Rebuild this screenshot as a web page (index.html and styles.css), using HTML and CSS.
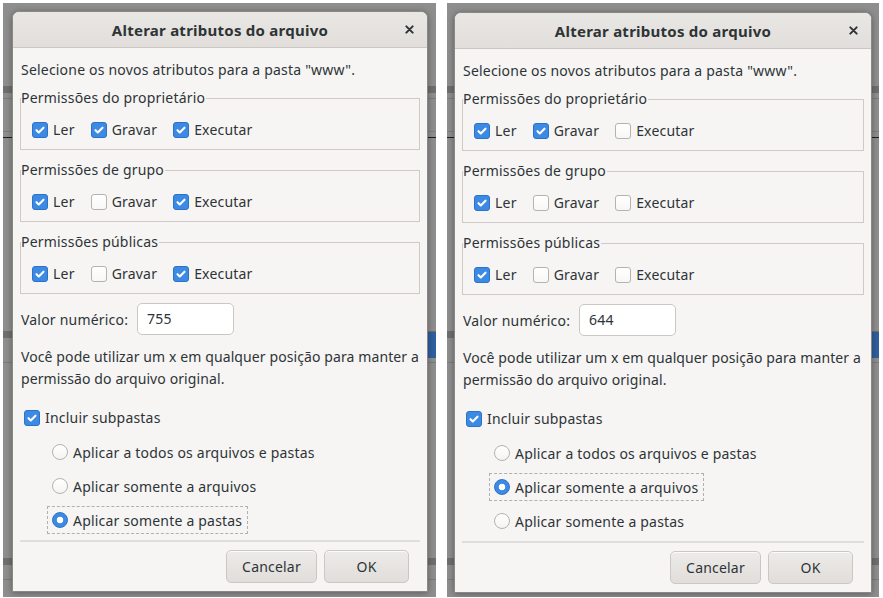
FILE: index.html
```html
<!DOCTYPE html>
<html lang="pt">
<head>
    <meta charset="UTF-8">
    <title>Alterar atributos do arquivo</title>
    <link rel="stylesheet" href="styles.css">
</head>
<body>
    <div class="shots">
        <!-- 755: grupo e público sem gravação -->
        <div class="shot shot-left">
            <div class="dialog">
                <div class="titlebar">
                    <span class="title">Alterar atributos do arquivo</span>
                    <span class="close"><svg viewBox="0 0 10 10"><path d="M1.5 1.5l7 7M8.5 1.5l-7 7"/></svg></span>
                </div>
                <div class="content">
                    <p class="intro">Selecione os novos atributos para a pasta "www".</p>

                    <fieldset class="frame">
                        <legend>Permissões do proprietário</legend>
                        <div class="checks">
                            <label class="check on"><span class="box"><svg viewBox="0 0 16 16"><path d="M4 8.2l2.6 2.6L12 5.4"/></svg></span>Ler</label>
                            <label class="check on"><span class="box"><svg viewBox="0 0 16 16"><path d="M4 8.2l2.6 2.6L12 5.4"/></svg></span>Gravar</label>
                            <label class="check on"><span class="box"><svg viewBox="0 0 16 16"><path d="M4 8.2l2.6 2.6L12 5.4"/></svg></span>Executar</label>
                        </div>
                    </fieldset>

                    <fieldset class="frame">
                        <legend>Permissões de grupo</legend>
                        <div class="checks">
                            <label class="check on"><span class="box"><svg viewBox="0 0 16 16"><path d="M4 8.2l2.6 2.6L12 5.4"/></svg></span>Ler</label>
                            <label class="check"><span class="box"></span>Gravar</label>
                            <label class="check on"><span class="box"><svg viewBox="0 0 16 16"><path d="M4 8.2l2.6 2.6L12 5.4"/></svg></span>Executar</label>
                        </div>
                    </fieldset>

                    <fieldset class="frame">
                        <legend>Permissões públicas</legend>
                        <div class="checks">
                            <label class="check on"><span class="box"><svg viewBox="0 0 16 16"><path d="M4 8.2l2.6 2.6L12 5.4"/></svg></span>Ler</label>
                            <label class="check"><span class="box"></span>Gravar</label>
                            <label class="check on"><span class="box"><svg viewBox="0 0 16 16"><path d="M4 8.2l2.6 2.6L12 5.4"/></svg></span>Executar</label>
                        </div>
                    </fieldset>

                    <div class="value-row">
                        <span class="value-label">Valor numérico:</span>
                        <div class="entry">755</div>
                    </div>

                    <p class="hint">Você pode utilizar um x em qualquer posição para manter a<br>permissão do arquivo original.</p>

                    <label class="check on subfolders"><span class="box"><svg viewBox="0 0 16 16"><path d="M4 8.2l2.6 2.6L12 5.4"/></svg></span>Incluir subpastas</label>

                    <div class="radios">
                        <label class="radio"><span class="dot"></span>Aplicar a todos os arquivos e pastas</label>
                        <label class="radio"><span class="dot"></span>Aplicar somente a arquivos</label>
                        <label class="radio on focus"><span class="dot"></span>Aplicar somente a pastas</label>
                    </div>

                    <div class="separator"></div>

                    <div class="buttons">
                        <button class="btn btn-cancel">Cancelar</button>
                        <button class="btn btn-ok">OK</button>
                    </div>
                </div>
            </div>
        </div>

        <!-- 644: só leitura para grupo e público -->
        <div class="shot shot-right">
            <div class="dialog">
                <div class="titlebar">
                    <span class="title">Alterar atributos do arquivo</span>
                    <span class="close"><svg viewBox="0 0 10 10"><path d="M1.5 1.5l7 7M8.5 1.5l-7 7"/></svg></span>
                </div>
                <div class="content">
                    <p class="intro">Selecione os novos atributos para a pasta "www".</p>

                    <fieldset class="frame">
                        <legend>Permissões do proprietário</legend>
                        <div class="checks">
                            <label class="check on"><span class="box"><svg viewBox="0 0 16 16"><path d="M4 8.2l2.6 2.6L12 5.4"/></svg></span>Ler</label>
                            <label class="check on"><span class="box"><svg viewBox="0 0 16 16"><path d="M4 8.2l2.6 2.6L12 5.4"/></svg></span>Gravar</label>
                            <label class="check"><span class="box"></span>Executar</label>
                        </div>
                    </fieldset>

                    <fieldset class="frame">
                        <legend>Permissões de grupo</legend>
                        <div class="checks">
                            <label class="check on"><span class="box"><svg viewBox="0 0 16 16"><path d="M4 8.2l2.6 2.6L12 5.4"/></svg></span>Ler</label>
                            <label class="check"><span class="box"></span>Gravar</label>
                            <label class="check"><span class="box"></span>Executar</label>
                        </div>
                    </fieldset>

                    <fieldset class="frame">
                        <legend>Permissões públicas</legend>
                        <div class="checks">
                            <label class="check on"><span class="box"><svg viewBox="0 0 16 16"><path d="M4 8.2l2.6 2.6L12 5.4"/></svg></span>Ler</label>
                            <label class="check"><span class="box"></span>Gravar</label>
                            <label class="check"><span class="box"></span>Executar</label>
                        </div>
                    </fieldset>

                    <div class="value-row">
                        <span class="value-label">Valor numérico:</span>
                        <div class="entry">644</div>
                    </div>

                    <p class="hint">Você pode utilizar um x em qualquer posição para manter a<br>permissão do arquivo original.</p>

                    <label class="check on subfolders"><span class="box"><svg viewBox="0 0 16 16"><path d="M4 8.2l2.6 2.6L12 5.4"/></svg></span>Incluir subpastas</label>

                    <div class="radios">
                        <label class="radio"><span class="dot"></span>Aplicar a todos os arquivos e pastas</label>
                        <label class="radio on focus"><span class="dot"></span>Aplicar somente a arquivos</label>
                        <label class="radio"><span class="dot"></span>Aplicar somente a pastas</label>
                    </div>

                    <div class="separator"></div>

                    <div class="buttons">
                        <button class="btn btn-cancel">Cancelar</button>
                        <button class="btn btn-ok">OK</button>
                    </div>
                </div>
            </div>
        </div>
    </div>
</body>
</html>
```

FILE: styles.css
```css
* {
    margin: 0;
    padding: 0;
    box-sizing: border-box;
}

body {
    background: #ffffff;
    font-family: 'Noto Sans', 'Open Sans', sans-serif;
    font-size: 14px;
    letter-spacing: 0.2px;
    color: #2e3436;
}

.shots {
    display: flex;
    gap: 11px;
    padding: 3px 0 0 3px;
}

/* dimmed window behind each dialog */
.shot {
    height: 594px;
    background:
        linear-gradient(to bottom, transparent 329px, #2f5f9e 329px, #2f5f9e 355px, transparent 355px) right top / 9px 100% no-repeat,
        linear-gradient(to bottom,
            #8e8e8e 0 83px, #6f6f6f 83px 90px, #8e8e8e 90px 95px, #7b7b7b 95px 96px,
            #8e8e8e 96px 128px, #7d7d7d 128px 129px, #8e8e8e 129px 134px, #1e1e1e 134px 135px,
            #8e8e8e 135px 328px, #6f6f6f 328px 335px, #8e8e8e 335px 359px, #7b7b7b 359px 360px,
            #8e8e8e 360px 555px, #6f6f6f 555px 562px, #8e8e8e 562px 576px, #7b7b7b 576px 577px,
            #8e8e8e 577px);
}

.shot-left {
    width: 433px;
    padding: 8px 8px 5px 9px;
}

.shot-right {
    width: 432px;
    padding: 9px 7px 4px 7px;
}

.dialog {
    height: 100%;
    background: #f6f5f4;
    border: 1px solid #8a8784;
    border-radius: 7px 7px 0 0;
    box-shadow: 0 1px 6px rgba(0, 0, 0, 0.35);
    display: flex;
    flex-direction: column;
}

.titlebar {
    height: 36px;
    flex-shrink: 0;
    display: flex;
    align-items: center;
    justify-content: center;
    position: relative;
    background: linear-gradient(to bottom, #e9e7e4, #e1dedb);
    border-bottom: 1px solid #cdc7c2;
    border-radius: 6px 6px 0 0;
}

.title {
    font-size: 15px;
    font-weight: 700;
    letter-spacing: 0.25px;
}

.close {
    position: absolute;
    right: 13px;
    top: 13px;
    width: 9px;
    height: 9px;
    display: flex;
}

.close svg {
    width: 9px;
    height: 9px;
    stroke: #2e3436;
    stroke-width: 2.2;
    stroke-linecap: round;
}

.content {
    flex: 1;
    padding: 13px 7px 0 7px;
    display: flex;
    flex-direction: column;
}

.intro {
    line-height: 18px;
    padding-left: 1px;
    margin-bottom: 10px;
}

.frame {
    border: 1px solid #cfcac4;
    padding: 11px 0 7px;
    margin-bottom: 11px;
}

.frame legend {
    line-height: 18px;
    padding: 0 1px 0 0;
}

.checks {
    display: flex;
    align-items: center;
    height: 24px;
    gap: 16px;
    padding-left: 11px;
}

.check {
    display: flex;
    align-items: center;
    gap: 5px;
    line-height: 18px;
}

.box {
    width: 16px;
    height: 16px;
    flex-shrink: 0;
    border: 1px solid #b6b3ae;
    border-radius: 3px;
    background: linear-gradient(to bottom, #ffffff, #f7f7f7);
    display: flex;
    align-items: center;
    justify-content: center;
}

.check.on .box {
    background: #3d8ae4;
    border-color: #2b73c8;
}

.box svg {
    width: 14px;
    height: 14px;
    fill: none;
    stroke: #ffffff;
    stroke-width: 2.4;
    stroke-linecap: round;
    stroke-linejoin: round;
}

.value-row {
    display: flex;
    align-items: center;
    gap: 9px;
    height: 32px;
    margin: -2px 0 11px 1px;
}

.entry {
    width: 97px;
    height: 32px;
    background: #ffffff;
    border: 1px solid #cdc7c2;
    border-radius: 5px;
    padding-left: 9px;
    line-height: 30px;
    font-size: 14px;
}

.hint {
    line-height: 22px;
    padding-left: 1px;
    margin-bottom: 16px;
    white-space: nowrap;
    letter-spacing: 0.1px;
}

.subfolders {
    height: 24px;
    padding-left: 4px;
    margin-bottom: 8px;
}

.radios {
    display: flex;
    flex-direction: column;
    gap: 6px;
    padding-left: 27px;
}

.radio {
    display: flex;
    align-items: center;
    gap: 5px;
    height: 28px;
    padding: 0 5px 0 4px;
    align-self: flex-start;
    border: 1px dashed transparent;
}

.radio.focus {
    border-color: rgba(46, 52, 54, 0.35);
}

.dot {
    width: 16px;
    height: 16px;
    flex-shrink: 0;
    border-radius: 50%;
    border: 1px solid #b6b3ae;
    background: linear-gradient(to bottom, #ffffff, #f4f4f4);
}

.radio.on .dot {
    background: radial-gradient(circle, #ffffff 0 3px, #3d8ae4 3.6px);
    border-color: #2b73c8;
}

.separator {
    height: 2px;
    background: #e0dedb;
    margin-top: 6px;
}

.buttons {
    display: flex;
    justify-content: flex-end;
    gap: 7px;
    padding: 8px 11px 0 0;
}

.btn {
    height: 33px;
    font-family: inherit;
    font-size: 14px;
    letter-spacing: 0.2px;
    color: #2e3436;
    border: 1px solid #cdc7c2;
    border-radius: 5px;
    background: linear-gradient(to bottom, #edebe9, #e0ddda);
    box-shadow: inset 0 1px rgba(255, 255, 255, 0.8);
}

.btn-cancel {
    width: 91px;
}

.btn-ok {
    width: 85px;
}
```
